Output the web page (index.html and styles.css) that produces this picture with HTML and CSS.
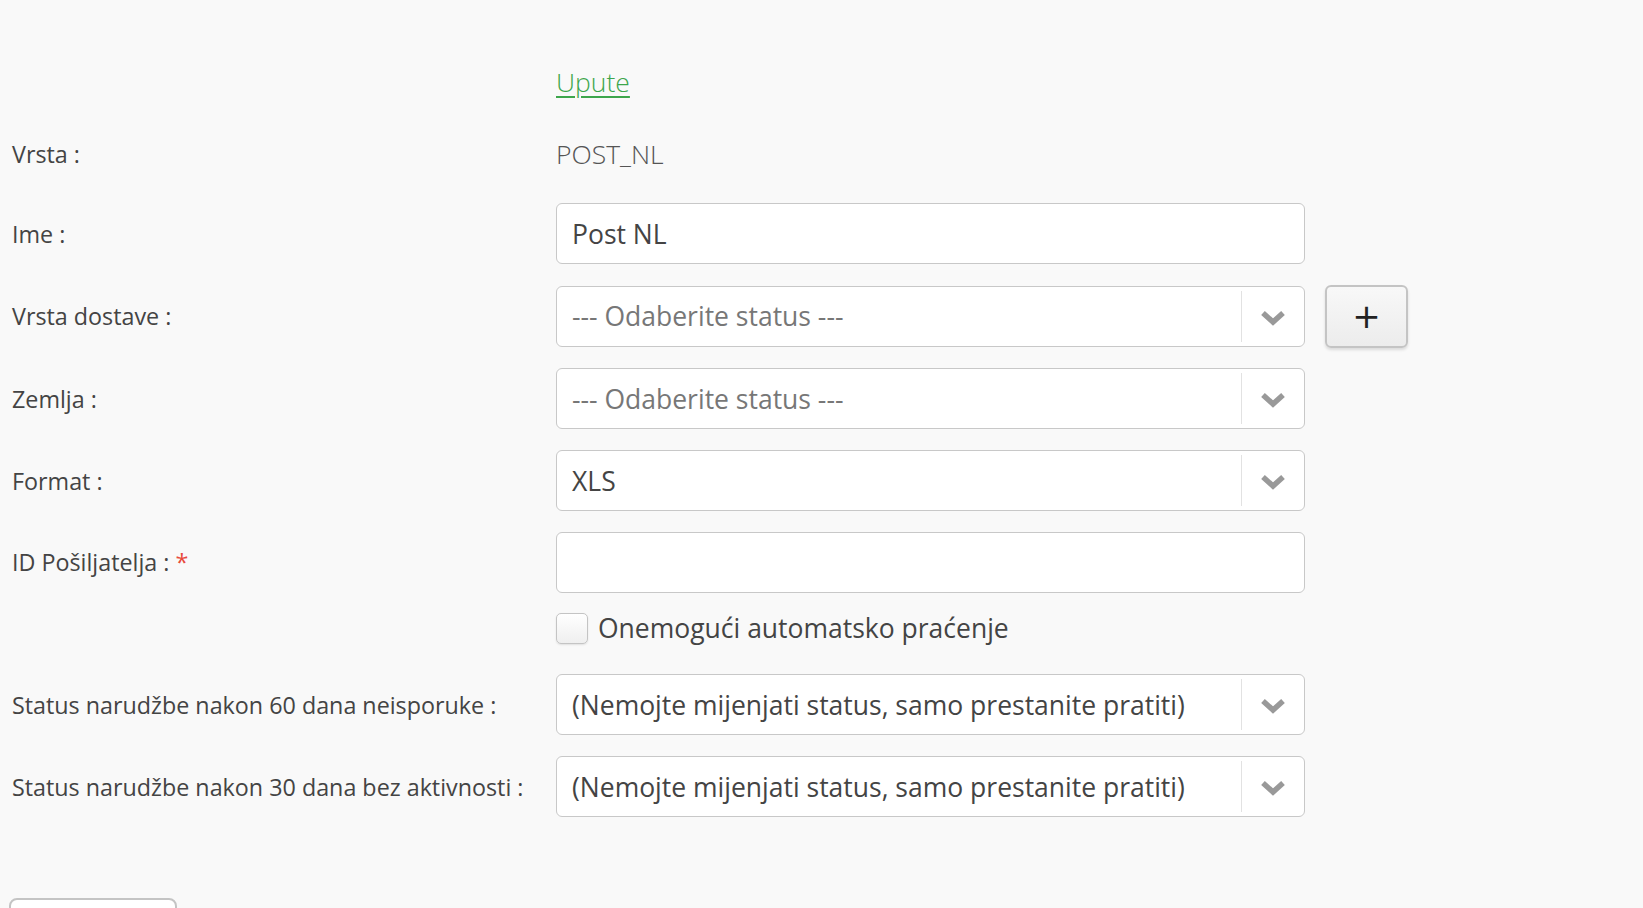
FILE: index.html
```html
<!DOCTYPE html>
<html lang="hr">
<head>
    <meta charset="UTF-8">
    <meta name="viewport" content="width=device-width, initial-scale=1.0">
    <title>Post NL - postavke</title>
    <link rel="stylesheet" href="styles.css">
</head>
<body>

    <!-- Carrier settings form -->
    <form class="carrier-form">
        <div class="row row-link">
            <span></span>
            <a href="#" class="help-link">Upute</a>
        </div>

        <div class="row row-static">
            <label>Vrsta :</label>
            <span class="static-value">POST_NL</span>
        </div>

        <div class="row">
            <label for="name">Ime :</label>
            <input type="text" id="name" class="field" value="Post NL">
        </div>

        <div class="row">
            <label>Vrsta dostave :</label>
            <div class="select">
                <span class="select-text placeholder">--- Odaberite status ---</span>
                <span class="select-arrow">
                    <svg width="26" height="16" viewBox="0 0 26 16"><polyline points="3,3 13,12 23,3" fill="none" stroke="#999" stroke-width="5.5"/></svg>
                </span>
            </div>
            <button type="button" class="add-btn">+</button>
        </div>

        <div class="row">
            <label>Zemlja :</label>
            <div class="select">
                <span class="select-text placeholder">--- Odaberite status ---</span>
                <span class="select-arrow">
                    <svg width="26" height="16" viewBox="0 0 26 16"><polyline points="3,3 13,12 23,3" fill="none" stroke="#999" stroke-width="5.5"/></svg>
                </span>
            </div>
        </div>

        <div class="row">
            <label>Format :</label>
            <div class="select">
                <span class="select-text">XLS</span>
                <span class="select-arrow">
                    <svg width="26" height="16" viewBox="0 0 26 16"><polyline points="3,3 13,12 23,3" fill="none" stroke="#999" stroke-width="5.5"/></svg>
                </span>
            </div>
        </div>

        <div class="row">
            <label for="sender">ID Pošiljatelja : <span class="required">*</span></label>
            <input type="text" id="sender" class="field">
        </div>

        <div class="row row-check">
            <span></span>
            <label class="check">
                <input type="checkbox">
                <span class="check-box"></span>
                Onemogući automatsko praćenje
            </label>
        </div>

        <div class="row">
            <label>Status narudžbe nakon 60 dana neisporuke :</label>
            <div class="select">
                <span class="select-text">(Nemojte mijenjati status, samo prestanite pratiti)</span>
                <span class="select-arrow">
                    <svg width="26" height="16" viewBox="0 0 26 16"><polyline points="3,3 13,12 23,3" fill="none" stroke="#999" stroke-width="5.5"/></svg>
                </span>
            </div>
        </div>

        <div class="row">
            <label>Status narudžbe nakon 30 dana bez aktivnosti :</label>
            <div class="select">
                <span class="select-text">(Nemojte mijenjati status, samo prestanite pratiti)</span>
                <span class="select-arrow">
                    <svg width="26" height="16" viewBox="0 0 26 16"><polyline points="3,3 13,12 23,3" fill="none" stroke="#999" stroke-width="5.5"/></svg>
                </span>
            </div>
        </div>

        <!-- Save button, only its top edge is on screen -->
        <div class="actions">
            <button type="button" class="save-btn"></button>
        </div>
    </form>

</body>
</html>
```

FILE: styles.css
```css
body {
    margin: 0;
    padding: 0;
    background-color: #f9f9f9;
    font-family: "Open Sans", Arial, sans-serif;
    color: #444;
    overflow: hidden;
}

/* Form */
.carrier-form {
    padding: 52px 0 0 12px;
}

.row {
    display: grid;
    grid-template-columns: 544px 749px auto;
    align-items: center;
    min-height: 61px;
    margin-bottom: 20.7px;
    font-size: 23.3px;
}

.row-link {
    min-height: 60px;
    margin-bottom: 12px;
}

.row-static {
    min-height: 60px;
    margin-bottom: 19px;
}

.row-check {
    min-height: 30px;
    height: 30px;
    margin-bottom: 31px;
}

.help-link {
    color: #3da64c;
    font-size: 26.5px;
    font-weight: 300;
    text-decoration: underline;
    text-underline-offset: 4px;
    text-decoration-thickness: 2px;
    justify-self: start;
}

.static-value {
    font-size: 26.5px;
    font-weight: 300;
    color: #555;
}

.required {
    color: #e84a3c;
}

/* Inputs and selects */
.field,
.select {
    box-sizing: border-box;
    height: 61px;
    width: 749px;
    background: #fff;
    border: 1px solid #c8c8c8;
    border-radius: 6px;
    font-family: inherit;
    font-size: 26.5px;
    color: #444;
}

.field {
    padding: 0 15px;
}

.select {
    display: flex;
    align-items: stretch;
}

.select-text {
    flex-grow: 1;
    display: flex;
    align-items: center;
    padding-left: 15px;
    white-space: nowrap;
}

.select-text.placeholder {
    color: #777;
}

.select-arrow {
    width: 62px;
    margin: 4px 0;
    border-left: 1px solid #e2e2e2;
    display: flex;
    align-items: center;
    justify-content: center;
}

.select-arrow svg {
    margin-top: 3px;
}

.add-btn {
    margin-left: 20px;
    width: 83px;
    height: 63px;
    background: linear-gradient(to bottom, #f8f8f8, #ececec);
    border: 2px solid #c4c4c4;
    border-radius: 6px;
    box-shadow: 0 2px 3px rgba(0, 0, 0, 0.12);
    font-family: "DejaVu Sans", sans-serif;
    font-size: 34px;
    line-height: 1;
    color: #222;
    cursor: pointer;
}

/* Checkbox */
.check {
    display: flex;
    align-items: center;
    gap: 10px;
    height: 30px;
    font-size: 26.5px;
    line-height: 30px;
    color: #444;
    cursor: pointer;
}

.check input {
    display: none;
}

.check-box {
    box-sizing: border-box;
    width: 32px;
    height: 31px;
    border: 1px solid #c4c4c4;
    border-radius: 5px;
    background: linear-gradient(to bottom, #fff, #efefef);
    box-shadow: 0 1px 2px rgba(0, 0, 0, 0.1);
}

/* Save button (cut off at the bottom) */
.actions {
    padding-top: 60px;
    margin-left: -3px;
}

.save-btn {
    width: 168px;
    height: 44px;
    background: #fff;
    border: 2px solid #c4c4c4;
    border-radius: 8px;
}
```
